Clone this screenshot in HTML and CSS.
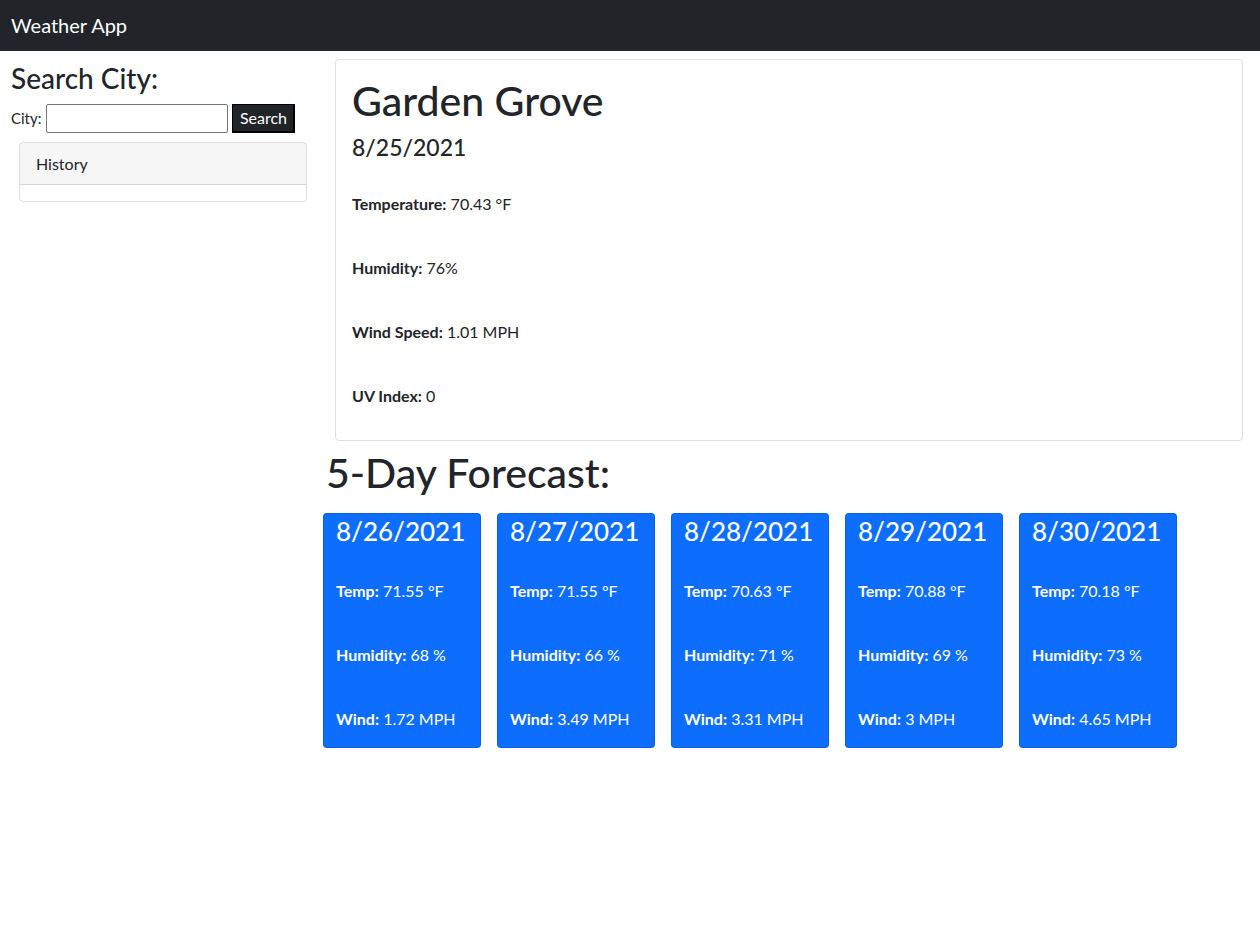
FILE: index.html
```html
<!DOCTYPE html>
<html lang="en">
<head>
<meta charset="utf-8">
<title>Weather App</title>
<link rel="stylesheet" href="styles.css">
</head>
<body>
<nav class="navbar"><span class="brand">Weather App</span></nav>
<main class="layout">
  <aside class="sidebar">
    <h3 class="side-title">Search City:</h3>
    <form class="search-form">
      <label class="city-label" for="city">City:</label>
      <input class="city-input" id="city" type="text">
      <button class="search-btn" type="button">Search</button>
    </form>
    <div class="history-card">
      <div class="history-header">History</div>
      <div class="history-body"></div>
    </div>
  </aside>
  <section class="content">
    <div class="today-card">
      <h1 class="city-name">Garden Grove</h1>
      <h4 class="today-date">8/25/2021</h4>
      <p class="stat first"><strong>Temperature:</strong> 70.43 °F</p>
      <p class="stat"><strong>Humidity:</strong> 76%</p>
      <p class="stat"><strong>Wind Speed:</strong> 1.01 MPH</p>
      <p class="stat last"><strong>UV Index:</strong> 0</p>
    </div>
    <h1 class="forecast-title">5-Day Forecast:</h1>
    <div class="forecast-row">
      <div class="day-card">
        <h3 class="day-date">8/26/2021</h3>
        <p class="day-stat"><strong>Temp:</strong> 71.55 °F</p>
        <p class="day-stat"><strong>Humidity:</strong> 68 %</p>
        <p class="day-stat"><strong>Wind:</strong> 1.72 MPH</p>
      </div>
      <div class="day-card">
        <h3 class="day-date">8/27/2021</h3>
        <p class="day-stat"><strong>Temp:</strong> 71.55 °F</p>
        <p class="day-stat"><strong>Humidity:</strong> 66 %</p>
        <p class="day-stat"><strong>Wind:</strong> 3.49 MPH</p>
      </div>
      <div class="day-card">
        <h3 class="day-date">8/28/2021</h3>
        <p class="day-stat"><strong>Temp:</strong> 70.63 °F</p>
        <p class="day-stat"><strong>Humidity:</strong> 71 %</p>
        <p class="day-stat"><strong>Wind:</strong> 3.31 MPH</p>
      </div>
      <div class="day-card">
        <h3 class="day-date">8/29/2021</h3>
        <p class="day-stat"><strong>Temp:</strong> 70.88 °F</p>
        <p class="day-stat"><strong>Humidity:</strong> 69 %</p>
        <p class="day-stat"><strong>Wind:</strong> 3 MPH</p>
      </div>
      <div class="day-card">
        <h3 class="day-date">8/30/2021</h3>
        <p class="day-stat"><strong>Temp:</strong> 70.18 °F</p>
        <p class="day-stat"><strong>Humidity:</strong> 73 %</p>
        <p class="day-stat"><strong>Wind:</strong> 4.65 MPH</p>
      </div>
    </div>
  </section>
</main>
</body>
</html>
```

FILE: styles.css
```css
* { box-sizing: border-box; }
body {
  margin: 0;
  font-family: Lato, "Liberation Sans", sans-serif;
  font-size: 16px;
  line-height: 1.5;
  color: #212529;
  background: #fff;
}
.navbar {
  height: 51px;
  background: #212529;
  display: flex;
  align-items: center;
  padding: 0 11px;
}
.brand {
  color: #fff;
  font-size: 20px;
  line-height: 30px;
  margin-top: -2px;
}
.layout {
  display: flex;
  padding-top: 8px;
}
.sidebar {
  width: 323px;
  flex: none;
  padding: 0 11px;
}
.side-title {
  margin: 3px 0 8px;
  font-size: 28px;
  font-weight: 500;
  line-height: 1.2;
}
.search-form {
  display: flex;
  align-items: center;
  height: 29px;
}
.city-label {
  font-size: 15px;
  margin-right: 5px;
}
.city-input {
  width: 182px;
  height: 29px;
  border: 1px solid #767676;
  border-radius: 2px;
  margin-right: 4px;
  font: inherit;
}
.search-btn {
  width: 63px;
  height: 29px;
  background: #212529;
  color: #fff;
  border: 1px solid #000;
  border-right-width: 2px;
  border-bottom-width: 2px;
  font-family: inherit;
  font-size: 16px;
  padding: 0;
}
.history-card {
  margin: 9px 0 0 8px;
  width: 288px;
  border: 1px solid rgba(0,0,0,.125);
  border-radius: 4px;
}
.history-header {
  padding: 8px 16px;
  background: rgba(0,0,0,.035);
  border-bottom: 1px solid rgba(0,0,0,.125);
  line-height: 25px;
}
.history-body {
  height: 16px;
}
.content {
  flex: 1;
  padding-right: 17px;
}
.today-card {
  margin-left: 12px;
  border: 1px solid rgba(0,0,0,.125);
  border-radius: 4px;
  padding: 16px;
}
.city-name {
  margin: 0 0 8px;
  font-size: 41px;
  font-weight: 500;
  line-height: 1.2;
}
.today-date {
  margin: 0 0 8px;
  font-size: 23px;
  font-weight: 500;
  line-height: 1.25;
}
.stat {
  margin: 0 0 40px;
  line-height: 24px;
}
.stat.first { margin-top: 30px; }
.stat.last { margin-bottom: 16px; }
.forecast-title {
  margin: 7px 0 16px 3px;
  font-size: 41px;
  font-weight: 500;
  line-height: 1.2;
}
.forecast-row {
  display: flex;
  gap: 16px;
}
.day-card {
  width: 158px;
  height: 235px;
  background: #0d6efd;
  color: #fff;
  border: 1px solid rgba(0,0,0,.125);
  border-radius: 4px;
  padding: 0 12px;
}
.day-date {
  margin: 0 0 31px;
  font-size: 26px;
  font-weight: 500;
  line-height: 34px;
}
.day-stat {
  margin: 0 0 40px;
  line-height: 24px;
}
```
